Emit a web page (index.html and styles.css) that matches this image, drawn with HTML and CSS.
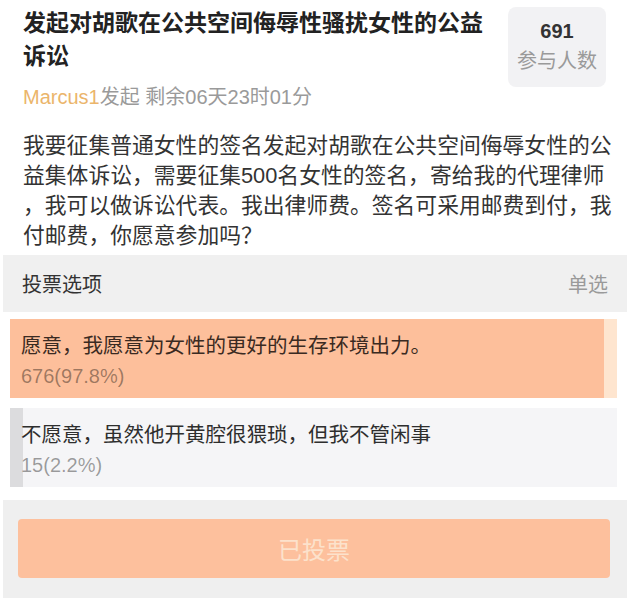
FILE: index.html
```html
<!DOCTYPE html>
<html lang="zh-CN">
<head>
  <meta charset="UTF-8" />
  <meta name="viewport" content="width=device-width, initial-scale=1.0"/>
  <title>投票</title>
  <link rel="stylesheet" href="styles.css">
</head>
<body>

  <div class="poll">
    <div class="head">
      <div class="head-text">
        <h1 class="title">发起对胡歌在公共空间侮辱性骚扰女性的公益诉讼</h1>
        <div class="meta"><span class="author">Marcus1</span>发起 剩余06天23时01分</div>
      </div>
      <div class="stats">
        <div class="stats-num">691</div>
        <div class="stats-label">参与人数</div>
      </div>
    </div>

    <p class="desc">我要征集普通女性的签名发起对胡歌在公共空间侮辱女性的公<br>益集体诉讼，需要征集500名女性的签名，寄给我的代理律师<br>，我可以做诉讼代表。我出律师费。签名可采用邮费到付，我<br>付邮费，你愿意参加吗？</p>

    <div class="options-head">
      <span>投票选项</span>
      <span class="mode">单选</span>
    </div>

    <div class="options">
      <div class="option chosen" style="--pct: 97.8%">
        <div class="option-text">愿意，我愿意为女性的更好的生存环境出力。</div>
        <div class="option-count">676(97.8%)</div>
      </div>
      <div class="option" style="--pct: 2.2%">
        <div class="option-text">不愿意，虽然他开黄腔很猥琐，但我不管闲事</div>
        <div class="option-count">15(2.2%)</div>
      </div>
    </div>

    <div class="footer">
      <button class="vote-btn" disabled>已投票</button>
    </div>
  </div>

</body>
</html>
```

FILE: styles.css
```css
* { box-sizing: border-box; margin: 0; padding: 0; }

body {
  font-family: "Liberation Sans", "Noto Sans CJK SC", sans-serif;
  background: #fff;
  color: #333;
}

.poll {
  width: 624px;
  margin-left: 3px;
}

.head {
  display: flex;
  justify-content: space-between;
  padding: 7px 21px 0 20px;
}

.title {
  width: 470px;
  font-size: 23px;
  font-weight: bold;
  line-height: 33px;
  color: #222;
}

.meta {
  margin-top: 10px;
  font-size: 20px;
  line-height: 28px;
  color: #9a9a9a;
}

.author {
  color: #ebb56b;
}

.stats {
  width: 98px;
  height: 80px;
  padding-top: 11px;
  background: #f2f2f4;
  border-radius: 8px;
  text-align: center;
}

.stats-num {
  font-size: 20px;
  font-weight: bold;
  line-height: 26px;
  color: #333;
}

.stats-label {
  margin-top: 3px;
  font-size: 20px;
  line-height: 28px;
  color: #9a9a9a;
}

.desc {
  padding: 20px 10px 4px 20px;
  font-size: 21.8px;
  line-height: 30px;
  color: #333;
  white-space: nowrap;
}

.options-head {
  display: flex;
  justify-content: space-between;
  align-items: center;
  height: 57px;
  padding: 0 19px 0 19px;
  background: #f0f0f0;
  font-size: 20px;
  color: #333;
}

.options-head .mode {
  color: #9a9a9a;
}

.options {
  display: flex;
  flex-direction: column;
  gap: 10px;
  padding: 7px 10px 13px 7px;
}

.option {
  height: 79px;
  padding: 13px 11px 0;
  background: linear-gradient(to right, #dcdcde var(--pct), #f5f5f7 var(--pct));
  font-size: 20.5px;
  line-height: 27px;
}

.option.chosen {
  background: linear-gradient(to right, #fdbf9b var(--pct), #fee5cf var(--pct));
}

.option-text {
  color: #2e2e2e;
}

.chosen .option-text {
  color: #3a2a22;
}

.option-count {
  margin-top: 4px;
  font-size: 20px;
  color: rgba(0, 0, 0, 0.38);
}

.footer {
  height: 98px;
  padding: 19px 17px 0 15px;
  background: #efefef;
}

.vote-btn {
  width: 100%;
  height: 59px;
  border: none;
  border-radius: 4px;
  background: #fdc09d;
  color: #fce2cc;
  font-family: inherit;
  font-size: 24px;
}
```
